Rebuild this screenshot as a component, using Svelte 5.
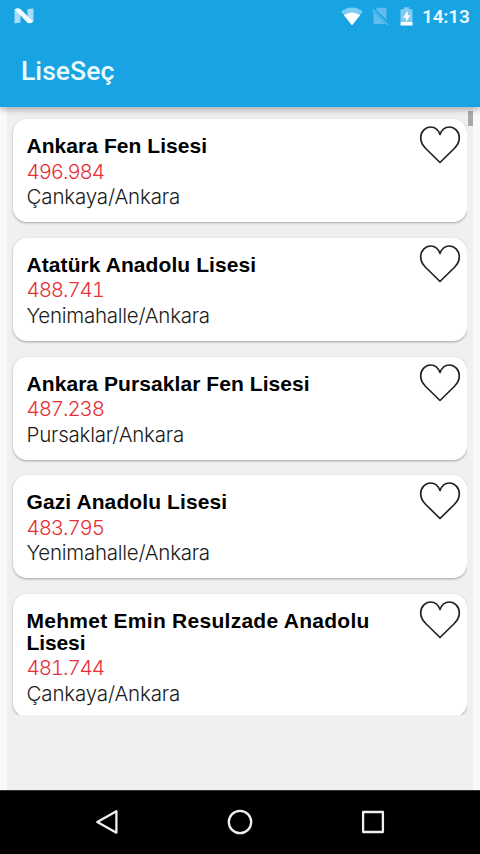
<script>
  const schools = [
    { name: [['Ankara Fen Lisesi', 0.05]], score: '496.984', place: 'Çankaya/Ankara', tight: -0.15 },
    { name: [['Atatürk Anadolu Lisesi', 0.08]], score: '488.741', place: 'Yenimahalle/Ankara', tight: -0.26 },
    { name: [['Ankara Pursaklar Fen Lisesi', 0.07]], score: '487.238', place: 'Pursaklar/Ankara', tight: -0.22 },
    { name: [['Gazi Anadolu Lisesi', 0.1]], score: '483.795', place: 'Yenimahalle/Ankara', tight: -0.26 },
    { name: [['Mehmet Emin Resulzade Anadolu', 0.27], ['Lisesi', -0.1]], score: '481.744', place: 'Çankaya/Ankara', tight: -0.15 }
  ];
</script>

<div class="screen">
  <header>
    <div class="status">
      <svg class="n" width="20" height="16" viewBox="0 0 20 16">
        <path d="M.5 1.500h6v13l-6 1zM13.500 1l6-.5v13l-6 1z" fill="#a5dcf8" />
        <path d="M.7 1.500Q3-.4 6 .8L19.300 13.500Q17 16.300 13.500 14.700z" fill="#f4fcff" />
      </svg>
      <div class="right">
        <svg class="wifi" width="24" height="19" viewBox="0 0 24 19">
          <path d="M12 18.300 1.200 4.500Q12-3.500 22.800 4.500z" fill="#7dccf3" />
          <path d="M12 18.300 3.900 8.300Q12 2.600 20.100 8.300z" fill="#fff" />
        </svg>
        <svg class="sim" width="19" height="19" viewBox="0 0 19 19">
          <path d="M6.500.8H14Q15.500.8 15.500 2.200V13L4.700 2.600zM2.500 5 14.300 17H3.800Q2.500 17 2.500 15.700z" fill="#5fbdee" />
          <path d="M1.300 2.200 17 18" stroke="#5fbdee" stroke-width="1.300" />
        </svg>
        <svg class="battery" width="13" height="19" viewBox="0 0 13 19">
          <path d="M4 .3h5v2h2.500q1 0 1 1V15H.5V3.300q0-1 1-1H4z" fill="#80cdf4" />
          <path d="M.5 15h12v3.500H.5zM7.700 3.700 3 10.700h3V15l4.400-6.700H7.700z" fill="#fff" />
        </svg>
        <span class="clock">14:13</span>
      </div>
    </div>
    <h1>LiseSeç</h1>
  </header>

  <main>
    <div class="list">
      {#each schools as school}
        <article>
          <div class="text">
            <h2>{#each school.name as [line, spacing]}<span style:letter-spacing="{spacing}px">{line}</span>{/each}</h2>
            <p class="score">{school.score}</p>
            <p class="place" style:letter-spacing="{school.tight}px">{school.place}</p>
          </div>
          <svg class="heart" width="42" height="39" viewBox="0 0 42 39">
            <path d="M21 9.500C19 4.200 15.800 2 11.800 2 6.200 2 1.700 6.600 1.700 12.800 1.700 17 3.600 20.500 6.700 23.500L21 37.500 35.300 23.500C38.400 20.500 40.300 17 40.300 12.800 40.300 6.600 35.800 2 30.200 2 26.200 2 23 4.200 21 9.500z" fill="none" stroke="#222" stroke-width="1.700" stroke-linejoin="round" />
          </svg>
        </article>
      {/each}
    </div>
    <i class="thumb"></i>
  </main>

  <nav>
    <svg width="26" height="28" viewBox="0 0 26 28"><path d="M22.400 3.300v21.400L3.300 14z" /></svg>
    <svg width="28" height="28" viewBox="0 0 28 28"><circle cx="14" cy="14" r="11.200" /></svg>
    <svg width="26" height="28" viewBox="0 0 26 28"><rect x="3.100" y="4" width="19.800" height="20" /></svg>
  </nav>
</div>

<style>
  .screen {
    width: 480px;
    height: 854px;
    display: flex;
    flex-direction: column;
    background: #fafafa;
    overflow: hidden;
  }
  header {
    position: relative;
    z-index: 1;
    flex: 0 0 107px;
    background: #18a3e3;
    box-shadow: 0 3px 6px rgba(0, 0, 0, 0.27);
    color: #fff;
    font-family: Roboto, sans-serif;
  }
  .status {
    height: 33px;
    display: flex;
    justify-content: space-between;
    align-items: flex-start;
  }
  .n { margin: 8px 0 0 14px; }
  .right { display: flex; padding: 7px 10px 0 0; }
  .wifi { margin-right: 1px; }
  .battery { margin-left: 10px; }
  .sim { margin-left: 6px; }
  .clock {
    width: 48px;
    margin-left: 9px;
    font-size: 19px;
    font-weight: 600;
    line-height: 20px;
    letter-spacing: -0.2px;
    color: #e9f9ff;
    white-space: nowrap;
  }
  h1 {
    margin: 22px 0 0 21px;
    font-size: 26.600px;
    line-height: 32px;
    font-weight: 500;
    color: #e9fbff;
  }
  main {
    flex: 0 0 683px;
    box-sizing: border-box;
    margin: 0 7px;
    background: #f0f0f0;
    display: flex;
    align-items: flex-start;
  }
  .list {
    flex: 0 0 460px;
    height: 608px;
    box-sizing: border-box;
    padding: 12px 0 0 6px;
    overflow: hidden;
    display: flex;
    flex-direction: column;
    gap: 15.750px;
  }
  article {
    flex: none;
    width: 454px;
    min-height: 103px;
    box-sizing: border-box;
    padding: 16px 6px 11px 13.500px;
    display: flex;
    justify-content: space-between;
    align-items: flex-start;
    background: #fff;
    border-radius: 14px;
    box-shadow: 0 1px 2.500px rgba(0, 0, 0, 0.33);
  }
  .heart { flex: none; margin-top: -10px; }
  h2, p { margin: 0; white-space: nowrap; }
  h2 {
    margin-bottom: 2px;
    font: 700 21px/21.500px "Liberation Sans", Arial, sans-serif;
    color: #000;
  }
  h2 span { display: block; }
  p { font: 300 20.500px/25.500px Inter, "Liberation Sans", sans-serif; }
  .score {
    color: #e62f36;
    font-variant-numeric: tabular-nums;
    letter-spacing: -1.1px;
  }
  .place { color: #1a1a1a; }
  .thumb {
    width: 5px;
    height: 15px;
    margin: 4px 0 0 1px;
    background: #a9a9a9;
  }
  nav {
    flex: 1;
    box-sizing: border-box;
    border-top: 1px solid #333;
    padding: 1px 94px 2px;
    background: #000;
    display: flex;
    justify-content: space-between;
    align-items: center;
  }
  nav svg {
    fill: none;
    stroke: #efefef;
    stroke-width: 2.300;
    stroke-linejoin: round;
  }
</style>
